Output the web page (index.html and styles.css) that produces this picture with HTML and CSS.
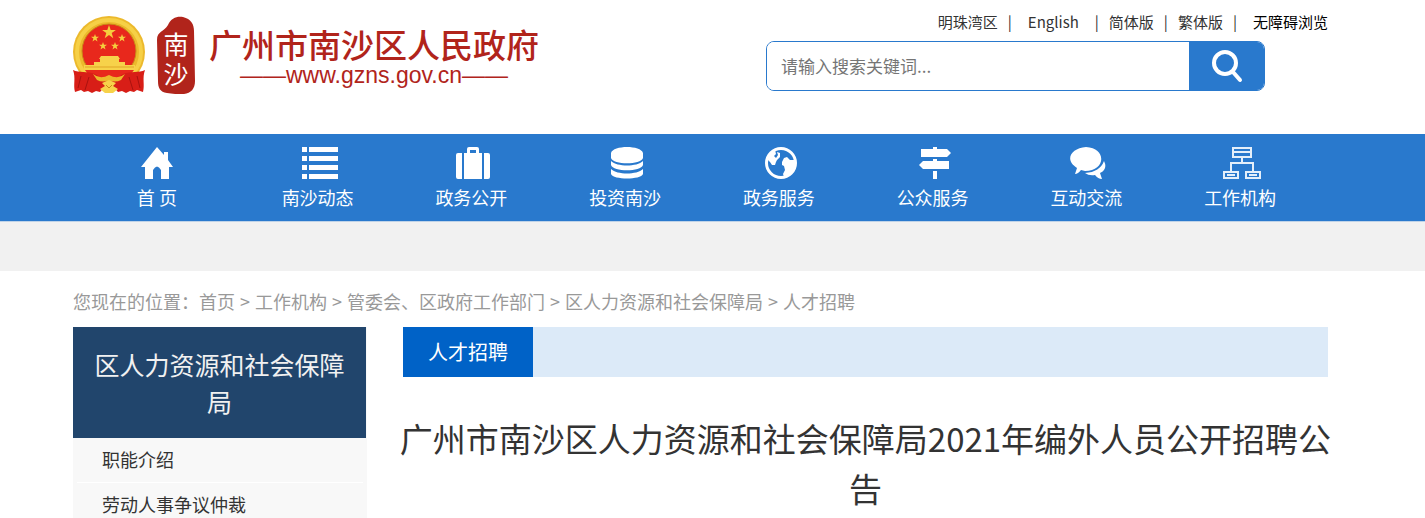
FILE: index.html
```html
<!DOCTYPE html>
<html lang="zh-CN">
<head>
    <meta charset="UTF-8">
    <meta name="viewport" content="width=device-width, initial-scale=1.0">
    <title>广州市南沙区人力资源和社会保障局2021年编外人员公开招聘公告</title>
    <link rel="stylesheet" href="styles.css">
</head>
<body>

    <!-- Header -->
    <header class="header wrap">
        <a class="logo" href="#">
            <svg class="emblem" width="72" height="78" viewBox="0 0 72 78">
                <circle cx="36" cy="36" r="36" fill="#ecb92c"/>
                <circle cx="36" cy="36" r="32" fill="none" stroke="#f6d046" stroke-width="4"/>
                <circle cx="36" cy="35" r="27" fill="#e8281c" stroke="#c98a18" stroke-width="1"/>
                <path d="M36 9l1.700 5h5.200l-4.200 3.100 1.600 5.100-4.300-3.100-4.300 3.100 1.600-5.100-4.200-3.100h5.200z" fill="#f5ce3e"/>
                <g fill="#f5ce3e">
                    <path id="star" d="M22 18l1 2.800h3l-2.400 1.800.9 2.900-2.500-1.700-2.500 1.700.9-2.900-2.400-1.800h3z"/>
                    <use href="#star" x="27"/>
                    <use href="#star" x="8" y="8"/>
                    <use href="#star" x="20" y="8"/>
                </g>
                <path d="M28 40h17l2 3H26zM27 43h19v3h6v3h10v5H11v-5h10v-3h6z" fill="#f7d24a"/>
                <path d="M12 51h49" stroke="#e0a526" stroke-width="1"/>
                <path d="M12 54h49l-6 8H18z" fill="#e8281c"/>
                <path d="M0 54c6 3 14 1 22 4l14 8-9 10-4-1-4 2-4-2-4 1-3-2-6 2c-2-7 1-14-2-22z" fill="#d81e17"/>
                <path d="M72 54c-6 3-14 1-22 4l-14 8 9 10 4-1 4 2 4-2 4 1 3-2 6 2c2-7-1-14 2-22z" fill="#d81e17"/>
                <path d="M8 60l-3 12M16 61l-4 13M64 60l3 12M56 61l4 13" stroke="#a9120f" stroke-width="1" fill="none"/>
                <path d="M20 58q7 6 16 1 9 5 16-1l-4 6q-6 3-12 0-6 3-12 0z" fill="#ecb92c"/>
                <path d="M29 67l7-3 7 3-3 3 5 3-5 4h-8l-5-4 5-3z" fill="#f7d24a"/>
                <path d="M33 69l3 3 3-3" stroke="#c98a18" fill="none"/>
            </svg>
            <svg class="seal" width="38" height="78" viewBox="0 0 38 78">
                <path d="M11 9C14 2 20 0 26 1c8 2 11 7 11 14l1 50c0 8-4 12-11 13-6 0-12 0-17-1-7-1-9-5-9-12L0 24c0-9 7-8 11-15z" fill="#b1241b"/>
                <text x="19" y="38" text-anchor="middle">南</text>
                <text x="19" y="68" text-anchor="middle">沙</text>
            </svg>
            <span class="logo-text">
                <span class="logo-name">广州市南沙区人民政府</span>
                <span class="logo-url">——www.gzns.gov.cn——</span>
            </span>
        </a>

        <div class="header-right">
            <nav class="top-links">
                <a href="#">明珠湾区</a><span>|</span>
                <a class="spaced" href="#">English</a><span>|</span>
                <a href="#">简体版</a><span>|</span>
                <a href="#">繁体版</a><span>|</span>
                <a class="access" href="#">无障碍浏览</a>
            </nav>
            <form class="search">
                <input type="text" name="keyword" placeholder="请输入搜索关键词..." aria-label="请输入搜索关键词">
                <button type="button" aria-label="搜索">
                    <svg width="32" height="34" viewBox="0 0 32 34" fill="none" stroke="#fff" stroke-linecap="round">
                        <ellipse cx="14" cy="14" rx="11" ry="11" stroke-width="4"/>
                        <path d="M22 23l7 8" stroke-width="4"/>
                    </svg>
                </button>
            </form>
        </div>
    </header>

    <!-- Main navigation -->
    <nav class="main-nav">
        <ul>
            <li class="home"><a href="#">
                <svg width="32" height="32" viewBox="0 0 32 32"><path d="M16 0l7 8V5h4v8l5 7h-4v12h-8V23q-4-7-8 0v9H4V20H0z"/></svg>
                首 页</a></li>
            <li><a href="#">
                <svg width="36" height="32" viewBox="0 0 36 32"><path d="M0 0h5v5H0zM7 0h29v5H7zM0 9h5v5H0zM7 9h29v5H7zM0 18h5v5H0zM7 18h29v5H7zM0 27h5v5H0zM7 27h29v5H7z"/></svg>
                南沙动态</a></li>
            <li><a href="#">
                <svg width="34" height="32" viewBox="0 0 34 32"><path d="M2 6h4v26H2q-2 0-2-2V8q0-2 2-2zM28 6h4q2 0 2 2v22q0 2-2 2h-4zM8 6h3V2q0-2 2-2h8q2 0 2 2v4h3v26H8zM14 3v3h6V3z" fill-rule="evenodd"/></svg>
                政务公开</a></li>
            <li><a href="#">
                <svg width="32" height="32" viewBox="0 0 32 32"><path d="M0 6C2-2 30-2 32 6v5c-2 7-30 7-32 0zM0 14c6 6 26 6 32 0v4c-2 7-30 7-32 0zM0 22c6 6 26 6 32 0v5c-2 6-30 6-32 0z"/></svg>
                投资南沙</a></li>
            <li><a href="#">
                <svg width="32" height="32" viewBox="0 0 32 32"><circle cx="16" cy="16" r="14.500" fill="none" stroke="#fff" stroke-width="3"/><path d="M2 12l4-7 4-2 1 4-2 2 2 2 2-3-1-3 3 1v4l-3 3-1 2-1 3-3 0-2-3zM17 15l2-4 3-1 3 3 4 0 1 3-1 6-5 6-5 2-1-3 2-4-1-4-2-1z"/></svg>
                政务服务</a></li>
            <li><a href="#">
                <svg width="32" height="32" viewBox="0 0 32 32"><path d="M14 0h4v2h10l4 4-4 4H2V2h12zM14 12h4v2h12v8H4l-4-4 4-4h10zM14 24h4v8h-4z"/></svg>
                公众服务</a></li>
            <li><a href="#">
                <svg width="36" height="32" viewBox="0 0 36 32"><path d="M16 0c21 1 20 24-1 24l-4-1q-3 4-6 4l2-6C-6 13 1 1 16 0z"/><path d="M34 14q4 8-4 12l2 6q-4 0-7-4-6 1-10-2 15-1 19-12z"/></svg>
                互动交流</a></li>
            <li><a href="#">
                <svg width="38" height="32" viewBox="0 0 38 32" fill="none" stroke="#e4effa" stroke-width="2"><path d="M10 1h18v9H10zM10 5h18M19 10v6M8 24v-8h22v8M1 25h14v6H1zM4 28h8M23 25h14v6H23zM26 28h8" fill="none"/></svg>
                工作机构</a></li>
        </ul>
    </nav>
    <div class="nav-strip"></div>

    <!-- Content -->
    <div class="wrap">
        <div class="breadcrumb">
            您现在的位置：<a href="#">首页</a><span>&gt;</span><a href="#">工作机构</a><span>&gt;</span><a href="#">管委会、区政府工作部门</a><span>&gt;</span><a href="#">区人力资源和社会保障局</a><span>&gt;</span><a href="#">人才招聘</a>
        </div>

        <div class="content">
            <aside class="sidebar">
                <h2>区人力资源和社会保障局</h2>
                <ul>
                    <li><a href="#">职能介绍</a></li>
                    <li><a href="#">劳动人事争议仲裁</a></li>
                </ul>
            </aside>

            <main class="article">
                <div class="tab-bar"><a href="#">人才招聘</a></div>
                <h1>广州市南沙区人力资源和社会保障局2021年编外人员公开招聘公告</h1>
            </main>
        </div>
    </div>

</body>
</html>
```
FILE: styles.css
```css
* {
    margin: 0;
    padding: 0;
    box-sizing: border-box;
}

body {
    font-family: "Noto Sans CJK SC", sans-serif;
    font-size: 18px;
    color: #333;
    background-color: #fff;
    overflow-x: hidden;
}

a {
    color: inherit;
    text-decoration: none;
}

ul {
    list-style: none;
}

.wrap {
    padding: 0 97px 0 73px;
}

/* Header */
.header {
    display: flex;
    justify-content: space-between;
    height: 134px;
}

.logo {
    display: flex;
    align-items: flex-start;
    padding-top: 16px;
    color: #b1241b;
}

.seal {
    margin: 0 14px 0 12px;
}

.seal text {
    font-size: 25px;
    fill: #fff;
}

.logo-text {
    display: flex;
    flex-direction: column;
    align-items: center;
    padding-top: 10px;
    white-space: nowrap;
}

.logo-name {
    font-size: 33px;
    font-weight: 500;
    line-height: 36px;
}

.logo-url {
    font-family: "Liberation Sans", sans-serif;
    font-size: 23px;
    line-height: 26px;
}

.header-right {
    width: 562px;
    padding-top: 12px;
}

.top-links {
    display: flex;
    justify-content: flex-end;
    gap: 10px;
    font-size: 15px;
    line-height: 20px;
}

.top-links .spaced {
    padding: 0 6px;
}

.top-links .access {
    padding-left: 6px;
    color: #000;
}

.search {
    display: flex;
    height: 50px;
    margin: 9px 63px 0 0;
    border: 1px solid #2979cd;
    border-radius: 8px;
    overflow: hidden;
}

.search input {
    flex: 1;
    min-width: 0;
    padding: 0 14px 2px;
    border: none;
    outline: none;
    font-family: inherit;
    font-size: 17px;
}

.search input::placeholder {
    color: #757575;
}

.search button {
    display: flex;
    align-items: center;
    justify-content: center;
    width: 75px;
    border: none;
    background-color: #2979cd;
    cursor: pointer;
}

/* Main navigation */
.main-nav {
    height: 88px;
    padding: 0 108px 0 87px;
    background-color: #2979cd;
    border-bottom: 1px solid #bfd3e8;
}

.main-nav ul {
    display: grid;
    grid-template-columns: repeat(8, 1fr);
}

.main-nav .home {
    padding-right: 14px;
}

.main-nav a {
    display: flex;
    flex-direction: column;
    align-items: center;
    gap: 5px;
    padding-top: 13px;
    color: #fff;
    line-height: 26px;
}

.main-nav svg {
    margin-left: 4px;
    fill: #fff;
}

.main-nav .home svg {
    margin-left: 0;
}

.nav-strip {
    height: 49px;
    background-color: #f1f1f1;
}

/* Breadcrumb */
.breadcrumb {
    padding: 17px 0 13px;
    line-height: 26px;
    color: #999;
}

.breadcrumb span {
    margin: 0 5px;
}

.content {
    display: flex;
    gap: 36px;
}

/* Sidebar */
.sidebar {
    flex: 0 0 294px;
    background-color: #f8f8f8;
}

.sidebar h2 {
    margin-right: 1px;
    padding: 19px 20px 18px;
    background-color: #21456c;
    color: #f1f1f1;
    font-size: 25px;
    font-weight: normal;
    line-height: 37px;
    text-align: center;
}

.sidebar li {
    margin: 0 4px;
    padding: 0 25px 2px;
    border-bottom: 1px solid #fff;
    line-height: 42px;
}

/* Article */
.article {
    flex: 1;
    min-width: 0;
}

.tab-bar {
    display: flex;
    background-color: #dceaf8;
}

.tab-bar a {
    padding: 0 25px;
    background-color: #0062c7;
    color: #fff;
    font-size: 20px;
    line-height: 50px;
}

.article h1 {
    margin: 36px -4px 0;
    font-size: 33px;
    font-weight: normal;
    line-height: 50px;
    text-align: center;
}
```
